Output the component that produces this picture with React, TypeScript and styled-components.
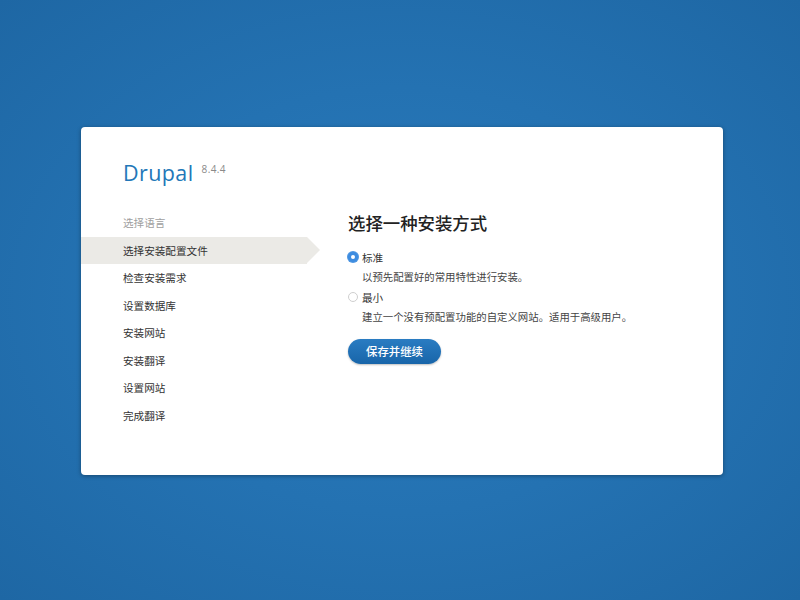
import React from "react";
import styled, { createGlobalStyle } from "styled-components";

const Global = createGlobalStyle`
  html, body { margin: 0; padding: 0; }
  body {
    font-family: "Noto Sans CJK SC", "Noto Sans", sans-serif;
    background: #1f6aa6;
  }
`;

const Page = styled.div`
  width: 800px;
  height: 600px;
  display: flex;
  align-items: center;
  justify-content: center;
  background: radial-gradient(ellipse at 50% 50%, #2a7bbc 0%, #2472b2 50%, #1e67a4 100%);
`;

const Card = styled.div`
  width: 642px;
  height: 348px;
  margin-left: 4px;
  margin-top: 2px;
  background: #fff;
  border-radius: 4px;
  box-shadow: 0 1px 4px rgba(0, 0, 0, 0.35);
  display: flex;
  flex-direction: column;
  box-sizing: border-box;
  padding-top: 35px;
`;

const Header = styled.div`
  display: flex;
  align-items: flex-start;
  padding-left: 42px;
  height: 47px;
`;

const Logo = styled.span`
  font-family: "Open Sans", "Noto Sans", sans-serif;
  font-size: 21.5px;
  line-height: 22px;
  color: #2277b8;
  letter-spacing: 0.4px;
`;

const Version = styled.span`
  font-family: "Open Sans", "Noto Sans", sans-serif;
  font-size: 10px;
  line-height: 10px;
  color: #8a8a8a;
  margin-left: 8px;
  margin-top: 2px;
  letter-spacing: 0.4px;
`;

const Body = styled.div`
  display: flex;
`;

const Sidebar = styled.ul`
  list-style: none;
  margin: 0;
  padding: 0;
  width: 239px;
  flex: none;
`;

const Step = styled.li<{ $state: "done" | "active" | "todo" }>`
  position: relative;
  height: 27.5px;
  line-height: 28.5px;
  padding-left: 42px;
  width: 226px;
  box-sizing: border-box;
  font-size: 10.6px;
  color: ${(p) => (p.$state === "done" ? "#a0a0a0" : "#333")};
  background: ${(p) => (p.$state === "active" ? "#ebeae6" : "transparent")};
  &::after {
    content: "";
    display: ${(p) => (p.$state === "active" ? "block" : "none")};
    position: absolute;
    right: -13px;
    top: 0;
    width: 0;
    height: 0;
    border-top: 13.75px solid transparent;
    border-bottom: 13.75px solid transparent;
    border-left: 13px solid #ebeae6;
  }
`;

const Main = styled.div`
  padding-left: 28px;
  display: flex;
  flex-direction: column;
  align-items: flex-start;
`;

const Title = styled.h1`
  margin: 0;
  font-size: 17.4px;
  line-height: 27.5px;
  font-weight: 500;
  color: #222;
`;

const Options = styled.div`
  margin-top: 11.5px;
  display: flex;
  flex-direction: column;
  gap: 2px;
`;

const Option = styled.div`
  display: flex;
  flex-direction: column;
`;

const Label = styled.label`
  display: flex;
  align-items: center;
  height: 19px;
  font-size: 10.6px;
  color: #333;
`;

const Radio = styled.span<{ $checked?: boolean }>`
  width: 10px;
  height: 10px;
  border-radius: 50%;
  box-sizing: border-box;
  margin-right: 4px;
  margin-top: -1px;
  display: flex;
  align-items: center;
  justify-content: center;
  background: ${(p) => (p.$checked ? "#3d8ce0" : "#fff")};
  border: ${(p) => (p.$checked ? "none" : "1px solid #cfcfcf")};
  box-shadow: ${(p) => (p.$checked ? "0 0 0 1px #4f97e2" : "none")};
  &::after {
    content: "";
    display: ${(p) => (p.$checked ? "block" : "none")};
    width: 4px;
    height: 4px;
    border-radius: 50%;
    background: #fff;
  }
`;

const Desc = styled.div`
  height: 19px;
  line-height: 19px;
  padding-left: 14px;
  font-size: 10.4px;
  color: #444;
`;

const Button = styled.button`
  margin-top: 12.5px;
  height: 25px;
  padding: 0 18px;
  border: none;
  border-radius: 13px;
  background: linear-gradient(#2a7cc2, #1865a9);
  box-shadow: 0 1px 2px rgba(0, 0, 0, 0.25);
  color: #fff;
  font-family: "Noto Sans CJK SC", "Noto Sans", sans-serif;
  font-size: 11.4px;
  font-weight: 500;
  cursor: pointer;
`;

const steps: { label: string; state: "done" | "active" | "todo" }[] = [
  { label: "选择语言", state: "done" },
  { label: "选择安装配置文件", state: "active" },
  { label: "检查安装需求", state: "todo" },
  { label: "设置数据库", state: "todo" },
  { label: "安装网站", state: "todo" },
  { label: "安装翻译", state: "todo" },
  { label: "设置网站", state: "todo" },
  { label: "完成翻译", state: "todo" },
];

export default function App() {
  return (
    <>
      <Global />
      <Page>
        <Card>
          <Header>
            <Logo>Drupal</Logo>
            <Version>8.4.4</Version>
          </Header>
          <Body>
            <Sidebar>
              {steps.map((s) => (
                <Step key={s.label} $state={s.state}>
                  {s.label}
                </Step>
              ))}
            </Sidebar>
            <Main>
              <Title>选择一种安装方式</Title>
              <Options>
                <Option>
                  <Label>
                    <Radio $checked />
                    标准
                  </Label>
                  <Desc>以预先配置好的常用特性进行安装。</Desc>
                </Option>
                <Option>
                  <Label>
                    <Radio />
                    最小
                  </Label>
                  <Desc>建立一个没有预配置功能的自定义网站。适用于高级用户。</Desc>
                </Option>
              </Options>
              <Button>保存并继续</Button>
            </Main>
          </Body>
        </Card>
      </Page>
    </>
  );
}
